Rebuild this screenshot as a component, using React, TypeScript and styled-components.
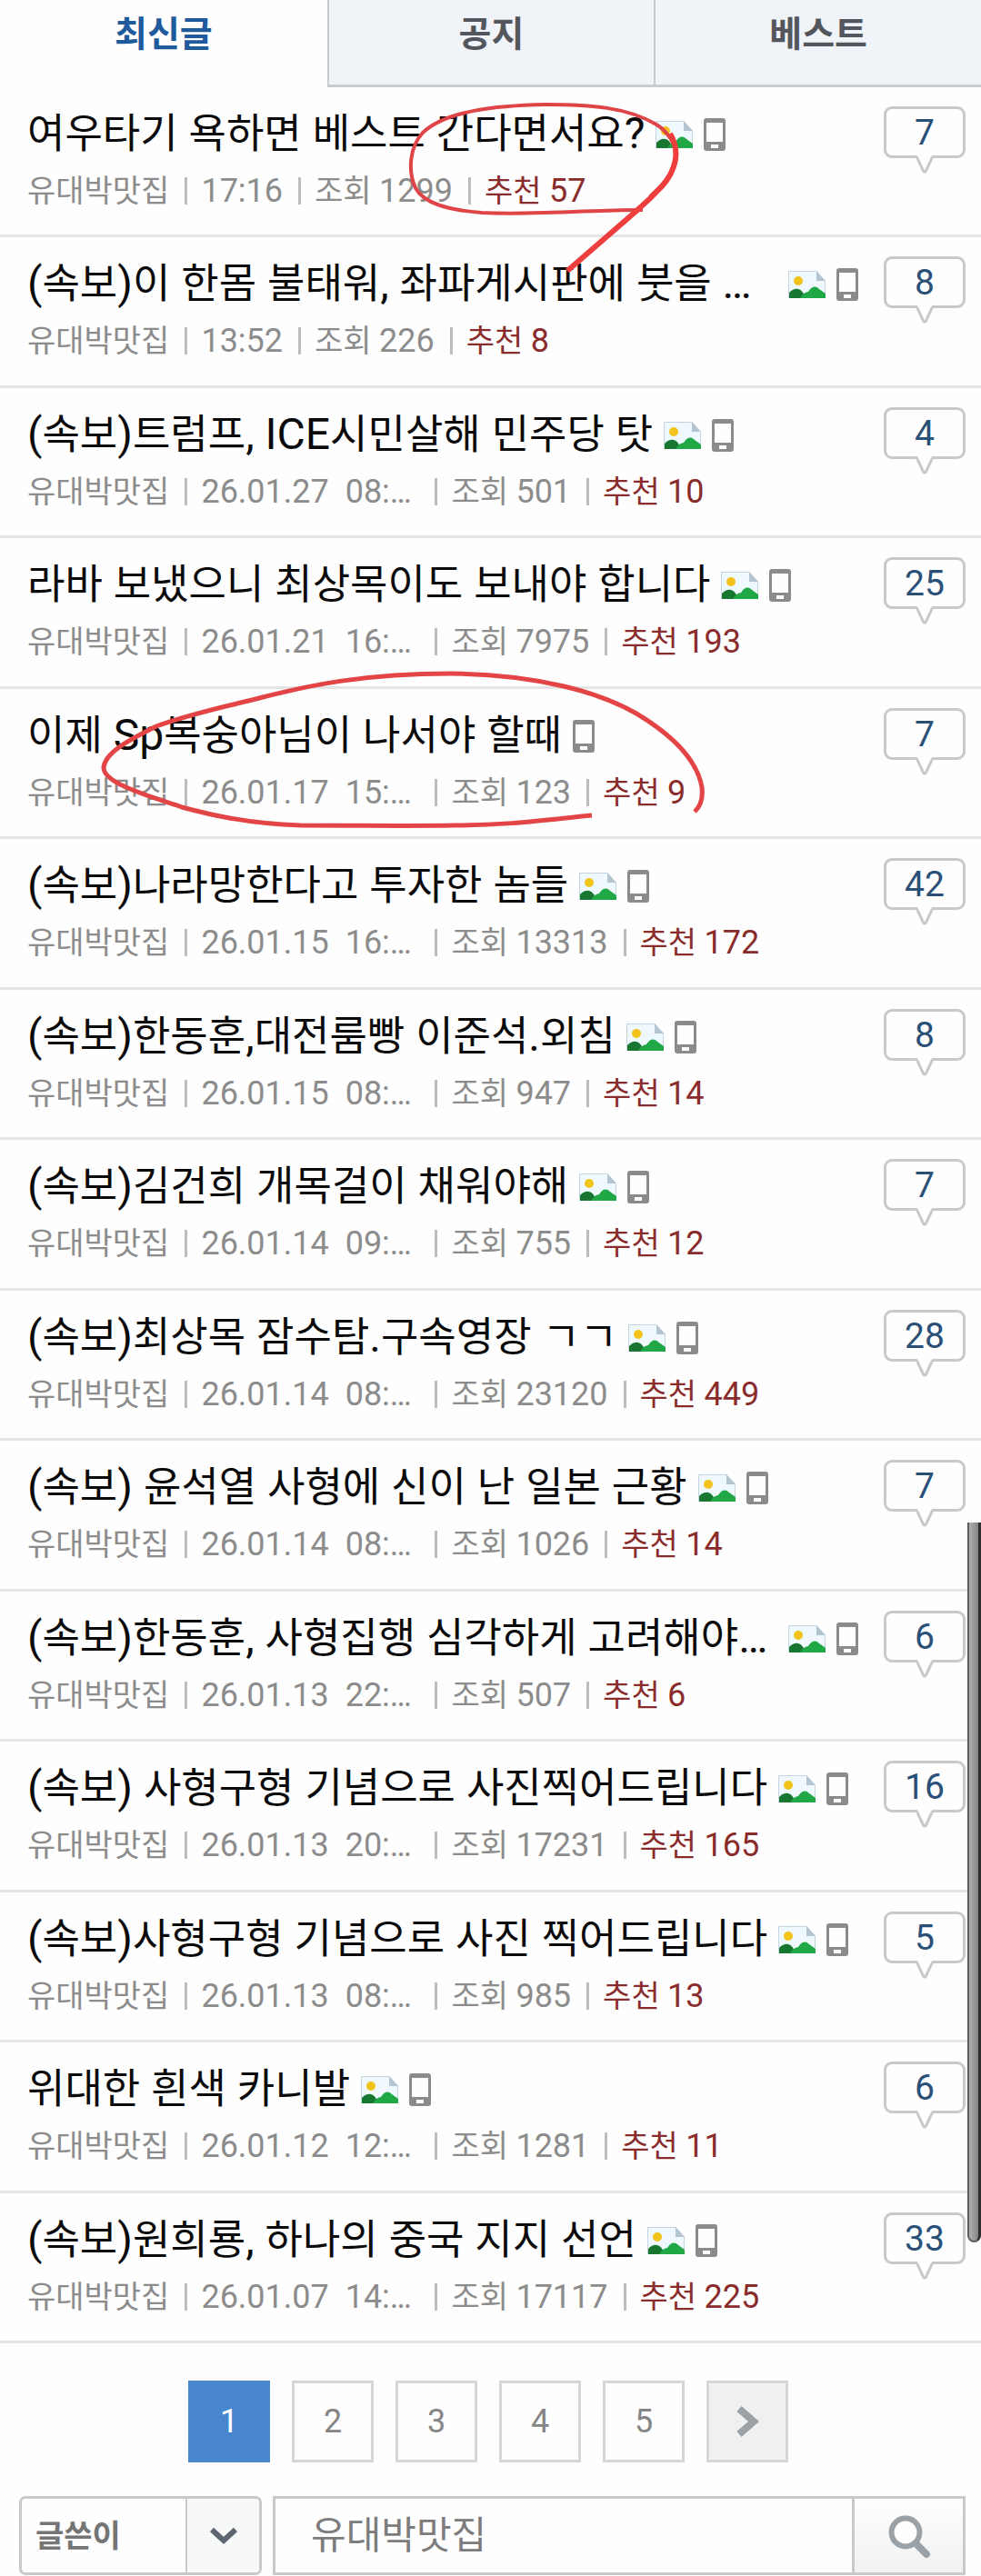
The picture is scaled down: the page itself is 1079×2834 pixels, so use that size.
import React from 'react';
import styled, { createGlobalStyle } from 'styled-components';

const GlobalStyle = createGlobalStyle`
  * { box-sizing: border-box; }
  body {
    margin: 0;
    background: #fefefe;
    font-family: Roboto, "Noto Sans CJK KR", sans-serif;
  }
  a { color: inherit; text-decoration: none; }
`;

const Page = styled.div`
  position: relative;
  overflow: hidden;
`;

const Tabs = styled.nav`
  display: grid;
  grid-template-columns: repeat(3, 1fr);
  height: 96px;
`;

const Tab = styled.a<{ $active?: boolean }>`
  padding-top: 9px;
  text-align: center;
  font-size: 39px;
  line-height: 58px;
  font-weight: 700;
  color: ${(p) => (p.$active ? '#1f5a9d' : '#53575d')};
  background: ${(p) => (p.$active ? '#fefefe' : '#f0f3f8')};
  border-left: ${(p) => (p.$active ? '0' : '2px solid #c8ccd1')};
  border-bottom: ${(p) => (p.$active ? '0' : '3px solid #c8ccd1')};
`;

const List = styled.ul`
  margin: 0;
  padding: 0;
  list-style: none;
`;

const Row = styled.li`
  display: flex;
  gap: 28px;
  min-height: 165px;
  padding: 21px 17px 0 30px;
  border-bottom: 3px solid #e4e4e4;
  &:nth-child(even) { min-height: 166px; }
`;

const Body = styled.div`
  flex: 1;
  min-width: 0;
`;

const Head = styled.div`
  display: flex;
  align-items: center;
  gap: 12px;
  height: 62px;
`;

const Title = styled.a<{ $clipped?: boolean }>`
  flex: ${(p) => (p.$clipped ? '1 1 0' : '0 1 auto')};
  min-width: 0;
  overflow: hidden;
  white-space: pre;
  font-size: 45px;
  line-height: 60px;
  color: #0a0a0a;
`;

const Latin = styled.span`
  font-size: 48px;
  line-height: 1;
`;

const Icon = styled.svg`
  display: block;
  flex: none;
`;

const Meta = styled.div`
  display: flex;
  align-items: center;
  height: 62px;
  font-size: 34px;
  line-height: 40px;
  color: #8c8c8c;
  white-space: pre;
`;

const Field = styled.span<{ $wide?: boolean }>`
  width: ${(p) => (p.$wide ? '240px' : 'auto')};
`;

const Divider = styled.span`
  width: 3px;
  height: 30px;
  margin: 0 15px 0 17px;
  background: #bdbdbd;
`;

const Votes = styled.span`
  color: #8a2c2c;
`;

const Num = styled.span`
  font-size: 36px;
`;

const Badge = styled.a`
  position: relative;
  flex: none;
  width: 90px;
  height: 57px;
  border: 3px solid #c9c9c9;
  border-radius: 9px;
  text-align: center;
  font-size: 39px;
  line-height: 52px;
  color: #2a5078;
`;

const Tail = styled.svg`
  position: absolute;
  left: 32px;
  top: 51px;
`;

const Pager = styled.nav`
  display: flex;
  justify-content: center;
  gap: 24px;
  padding: 41px 5px 37px 0;
`;

const PageLink = styled.a<{ $current?: boolean; $next?: boolean }>`
  display: flex;
  align-items: center;
  justify-content: center;
  width: 90px;
  height: 90px;
  border: 3px solid ${(p) => (p.$current ? '#4886d0' : '#d6d6d6')};
  background: ${(p) => (p.$current ? '#4886d0' : p.$next ? '#f0f0f0' : '#fefefe')};
  color: ${(p) => (p.$current ? '#ffffff' : '#858585')};
  font-size: 36px;
`;

const SearchForm = styled.form`
  display: flex;
  gap: 12px;
  padding: 0 17px 0 21px;
`;

const SelectBox = styled.div`
  display: grid;
  grid-template-columns: 1fr 81px;
  width: 267px;
  height: 87px;
  border: 3px solid #c9c9c9;
  border-radius: 7px;
  overflow: hidden;
`;

const Select = styled.select`
  grid-area: 1 / 1 / 2 / 3;
  appearance: none;
  border: 0;
  padding: 0 0 0 15px;
  background: transparent;
  font: 700 34px/48px Roboto, "Noto Sans CJK KR", sans-serif;
  color: #757575;
`;

const Arrow = styled.span`
  grid-area: 1 / 2;
  display: flex;
  align-items: center;
  justify-content: center;
  border-left: 2px solid #c9c9c9;
  background: #f7f9f8;
  pointer-events: none;
`;

const SearchField = styled.div`
  display: flex;
  flex: 1;
  height: 87px;
  border: 3px solid #c9c9c9;
`;

const SearchInput = styled.input`
  flex: 1;
  min-width: 0;
  border: 0;
  padding: 0 39px;
  background: #fefefe;
  font: 400 42px/60px Roboto, "Noto Sans CJK KR", sans-serif;
  color: #7c7c7c;
`;

const SearchButton = styled.button`
  display: flex;
  align-items: center;
  justify-content: center;
  width: 122px;
  padding: 0;
  border: 0;
  border-left: 3px solid #c9c9c9;
  background: linear-gradient(#fefefe, #f1f1f1);
`;

const Marks = styled.svg`
  position: absolute;
  left: 0;
  top: 0;
  pointer-events: none;
`;

const ScrollThumb = styled.div`
  position: absolute;
  right: 0;
  top: 1675px;
  width: 15px;
  height: 792px;
  border: 2px solid #5c5c5c;
  border-top: 0;
  border-right: 3px solid #2e2e2e;
  border-radius: 0 0 8px 8px;
  background: linear-gradient(90deg, #b0b0b0, #858585);
`;

interface Post {
  title: string;
  date: string;
  views: number;
  votes: number;
  comments: number;
  clipped?: boolean;
  noPicture?: boolean;
}

const posts: Post[] = [
  { title: '여우타기 욕하면 베스트 간다면서요?', date: '17:16', views: 1299, votes: 57, comments: 7 },
  { title: '(속보)이 한몸 불태워, 좌파게시판에 붓을 …', date: '13:52', views: 226, votes: 8, comments: 8, clipped: true },
  { title: '(속보)트럼프, ICE시민살해 민주당 탓', date: '26.01.27  08:…', views: 501, votes: 10, comments: 4 },
  { title: '라바 보냈으니 최상목이도 보내야 합니다', date: '26.01.21  16:…', views: 7975, votes: 193, comments: 25 },
  { title: '이제 Sp복숭아님이 나서야 할때', date: '26.01.17  15:…', views: 123, votes: 9, comments: 7, noPicture: true },
  { title: '(속보)나라망한다고 투자한 놈들', date: '26.01.15  16:…', views: 13313, votes: 172, comments: 42 },
  { title: '(속보)한동훈,대전룸빵 이준석.외침', date: '26.01.15  08:…', views: 947, votes: 14, comments: 8 },
  { title: '(속보)김건희 개목걸이 채워야해', date: '26.01.14  09:…', views: 755, votes: 12, comments: 7 },
  { title: '(속보)최상목 잠수탐.구속영장 ㄱㄱ', date: '26.01.14  08:…', views: 23120, votes: 449, comments: 28 },
  { title: '(속보) 윤석열 사형에 신이 난 일본 근황', date: '26.01.14  08:…', views: 1026, votes: 14, comments: 7 },
  { title: '(속보)한동훈, 사형집행 심각하게 고려해야…', date: '26.01.13  22:…', views: 507, votes: 6, comments: 6, clipped: true },
  { title: '(속보) 사형구형 기념으로 사진찍어드립니다', date: '26.01.13  20:…', views: 17231, votes: 165, comments: 16 },
  { title: '(속보)사형구형 기념으로 사진 찍어드립니다', date: '26.01.13  08:…', views: 985, votes: 13, comments: 5 },
  { title: '위대한 흰색 카니발', date: '26.01.12  12:…', views: 1281, votes: 11, comments: 6 },
  { title: '(속보)원희룡, 하나의 중국 지지 선언', date: '26.01.07  14:…', views: 17117, votes: 225, comments: 33 },
];

// Latin letters, spaces and punctuation are set a little larger than the Hangul around them.
const withLatin = (text: string) =>
  text
    .split(/([A-Za-z(),.?… ]+)/)
    .map((part, i) => (i % 2 ? <Latin key={i}>{part}</Latin> : part));

const PictureIcon = () => (
  <Icon width="41" height="30" viewBox="0 0 41 30" role="img" aria-label="사진">
    <path d="M.5.5H31L40.500 11V29.500H.5Z" fill="#eef8fd" stroke="#c5d5e0" />
    <path d="M31 0 41 11H31Z" fill="#b4c5d2" />
    <circle cx="11" cy="11" r="5" fill="#f2c31b" />
    <path d="M1 30V24Q6 19 11 20Q16 21 19 30Z" fill="#17762f" />
    <path d="M13 30Q16 24 22 23Q28 14 34 20L41 25V30Z" fill="#20a847" />
  </Icon>
);

const PhoneIcon = () => (
  <Icon width="24" height="36" viewBox="0 0 24 36" role="img" aria-label="모바일">
    <path
      fillRule="evenodd"
      fill="#8b8b8b"
      d="M3 0H21Q24 0 24 3V33Q24 36 21 36H3Q0 36 0 33V3Q0 0 3 0ZM3 5V26H21V5ZM8 29V33H16V29Z"
    />
  </Icon>
);

const PostRow = ({ post }: { post: Post }) => (
  <Row>
    <Body>
      <Head>
        <Title href="#" $clipped={post.clipped}>{withLatin(post.title)}</Title>
        {!post.noPicture && <PictureIcon />}
        <PhoneIcon />
      </Head>
      <Meta>
        <Field>유대박맛집</Field>
        <Divider />
        <Field $wide={post.date.length > 5}><Num>{post.date}</Num></Field>
        <Divider />
        <Field>조회 <Num>{post.views}</Num></Field>
        <Divider />
        <Votes>추천 <Num>{post.votes}</Num></Votes>
      </Meta>
    </Body>
    <Badge href="#">
      {post.comments}
      <Tail width="20" height="22" viewBox="0 0 20 22" aria-hidden="true">
        <path d="M2 0H18V3L11.500 17Q10 19 8.500 17L2 3Z" fill="#fefefe" />
        <path d="M1 1.500 2 3 8.500 17Q10 19 11.500 17L18 3 19 1.500" fill="none" stroke="#c9c9c9" strokeWidth="3" />
      </Tail>
    </Badge>
  </Row>
);

export default function App() {
  return (
    <Page>
      <GlobalStyle />
      <Tabs>
        <Tab href="#" $active>최신글</Tab>
        <Tab href="#">공지</Tab>
        <Tab href="#">베스트</Tab>
      </Tabs>
      <List>
        {posts.map((post) => <PostRow key={post.title} post={post} />)}
      </List>
      <Pager aria-label="페이지">
        {[1, 2, 3, 4, 5].map((n) => (
          <PageLink key={n} href="#" $current={n === 1}>{n}</PageLink>
        ))}
        <PageLink href="#" $next aria-label="다음">
          <Icon width="26" height="34" viewBox="0 0 26 34">
            <path d="M4 3 20 17 4 31" fill="none" stroke="#9ba2a7" strokeWidth="8" />
          </Icon>
        </PageLink>
      </Pager>
      <SearchForm onSubmit={(e) => e.preventDefault()}>
        <SelectBox>
          <Arrow>
            <Icon width="32" height="22" viewBox="0 0 32 22">
              <path d="M3 4 16 16 29 4" fill="none" stroke="#5d6771" strokeWidth="6" />
            </Icon>
          </Arrow>
          <Select aria-label="검색 조건" defaultValue="writer">
            <option value="writer">글쓴이</option>
          </Select>
        </SelectBox>
        <SearchField>
          <SearchInput aria-label="검색어" defaultValue="유대박맛집" />
          <SearchButton type="submit" aria-label="검색">
            <Icon width="48" height="48" viewBox="0 0 48 48">
              <circle cx="20" cy="20" r="15.500" fill="#fefefe" stroke="#9ba2a7" strokeWidth="6" />
              <path d="M31 32 43 44" stroke="#9ba2a7" strokeWidth="8" strokeLinecap="round" />
            </Icon>
          </SearchButton>
        </SearchField>
      </SearchForm>
      <Marks width="800" height="920" viewBox="0 0 800 920" fill="none" aria-hidden="true">
        <path
          d="M707 231C665 230 590 237 530 234C490 231 466 223 457 207C448 187 451 161 465 146C490 122 545 116 600 115C650 115 690 118 722 137C735 145 744 160 744 172C743 185 734 200 715 216"
          stroke="#df4547"
          strokeWidth="4"
        />
        <path d="M737 147C749 167 743 188 728 205Q715 219 700 232L624 298" stroke="#ee3f3e" strokeWidth="6" />
        <path
          d="M651 897C600 902 560 908 500 908C450 909 400 908 330 908C270 906 230 896 200 888C165 876 113 862 114 844C116 828 140 815 172 799C210 785 250 777 289 767C340 754 400 741 496 741C592 742 660 762 700 785C745 812 767 838 772 866Q774 884 764 893"
          stroke="#e34445"
          strokeWidth="5"
        />
      </Marks>
      <ScrollThumb />
    </Page>
  );
}
